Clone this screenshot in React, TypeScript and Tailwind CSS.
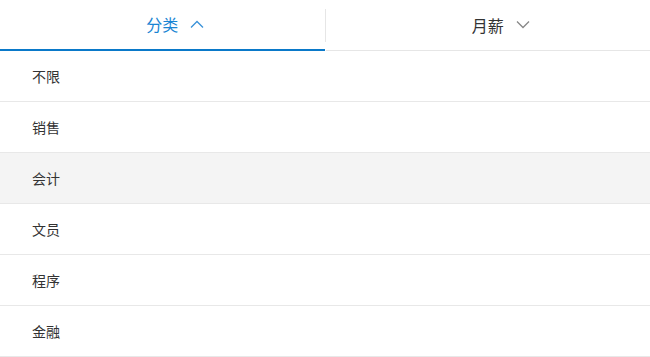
const categories = ['不限', '销售', '会计', '文员', '程序', '金融'];

function Chevron({ up }: { up?: boolean }) {
  return (
    <svg
      className="absolute left-full top-1/2 ml-[12px] -translate-y-1/2"
      fill="none"
      height="9"
      stroke="currentColor"
      strokeWidth="1.3"
      viewBox="0 0 14 9"
      width="14"
    >
      {up ? <polyline points="1,8 7,2 13,8" /> : <polyline points="1,1 7,7 13,1" />}
    </svg>
  );
}

export default function App() {
  return (
    <div
      className="w-[650px] bg-white text-[#333]"
      style={{ fontFamily: '"Noto Sans CJK SC", "Noto Sans", sans-serif' }}
    >
      <div className="flex h-[51px]">
        <div className="flex flex-1 items-center justify-center border-b-2 border-[#0a79c9] pb-[2px] text-[#1a85d3]">
          <span className="relative text-[16px] leading-none">
            分类
            <span className="text-[#3a92d8]">
              <Chevron up />
            </span>
          </span>
        </div>
        <div className="my-[9px] w-px bg-[#e6e6e6]" />
        <div className="flex flex-1 items-center justify-center border-b border-[#e6e6e6] pb-[1px] text-[#333]">
          <span className="relative text-[16px] leading-none">
            月薪
            <span className="text-[#888]">
              <Chevron />
            </span>
          </span>
        </div>
      </div>
      <ul>
        {categories.map((c) => (
          <li
            className={`flex h-[51px] items-center border-b border-[#e8e8e8] pl-[32px] text-[14px] ${
              c === '会计' ? 'bg-[#f4f4f4]' : 'bg-white'
            }`}
            key={c}
          >
            {c}
          </li>
        ))}
      </ul>
    </div>
  );
}
